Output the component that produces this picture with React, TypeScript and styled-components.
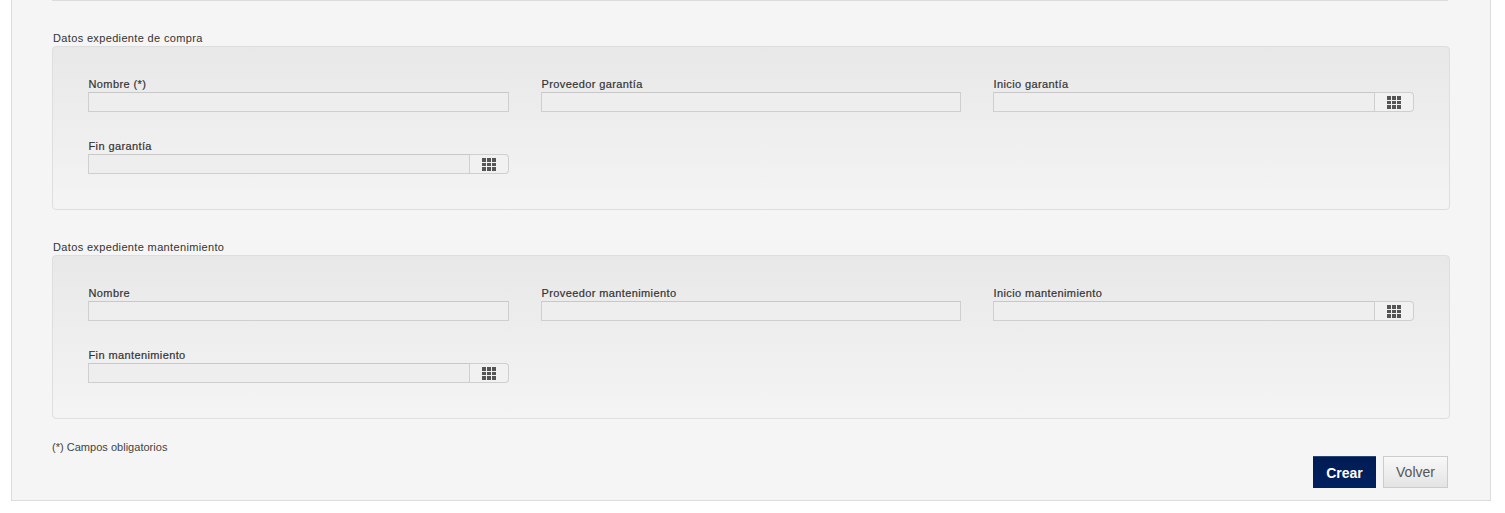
import styled, { createGlobalStyle } from 'styled-components';

const GlobalStyle = createGlobalStyle`
  html, body {
    margin: 0;
    padding: 0;
    background: #fff;
    font-family: 'Liberation Sans', Arial, sans-serif;
  }
`;

const Panel = styled.div`
  box-sizing: border-box;
  width: 1480px;
  height: 501px;
  margin-left: 11px;
  padding: 0 40px 0 40px;
  background: #f5f5f5;
  border: 1px solid #dcdcdc;
  border-top: none;
`;

const TopRule = styled.div`
  height: 1px;
  width: 1396px;
  background: #dcdcdc;
  margin-bottom: 31px;
`;

const SectionTitle = styled.div`
  font-size: 11px;
  line-height: 13px;
  letter-spacing: 0.35px;
  color: #333;
  margin-bottom: 1px;
  padding-left: 1px;
`;

const Fieldset = styled.div<{ $gapBelow: number }>`
  box-sizing: border-box;
  width: 1398px;
  height: 164px;
  padding: 30px 35px 0;
  margin-bottom: ${(props) => props.$gapBelow}px;
  border: 1px solid #dedede;
  border-radius: 4px;
  background: linear-gradient(to bottom, #e8e8e8 0%, #f4f4f4 100%);
  display: grid;
  grid-template-columns: 421px 420px 421px;
  grid-auto-rows: 62px;
  column-gap: 32px;
`;

const Field = styled.div`
  display: flex;
  flex-direction: column;
`;

const Label = styled.label`
  font-size: 11px;
  font-weight: normal;
  line-height: 15px;
  letter-spacing: 0.39px;
  color: #333;
  padding-left: 0.5px;
  -webkit-text-stroke: 0.2px #333;
`;

const InputRow = styled.div`
  display: flex;
  height: 20px;
`;

const TextInput = styled.input`
  box-sizing: border-box;
  flex: 1;
  min-width: 0;
  height: 20px;
  padding: 0 4px;
  background: #eeeeee;
  border: 1px solid #cfcfcf;
  border-top-color: #c8c8c8;
  outline: none;
`;

const CalendarButton = styled.button`
  box-sizing: border-box;
  width: 39px;
  height: 20px;
  padding: 0;
  display: flex;
  align-items: center;
  justify-content: center;
  background: #f1f1f1;
  border: 1px solid #cfcfcf;
  border-left: none;
  border-radius: 0 4px 4px 0;
`;

const Footer = styled.div`
  width: 1396px;
  margin-top: -8px;
`;

const Legend = styled.div`
  font-size: 11px;
  line-height: 12px;
  letter-spacing: 0.02px;
  color: #444;
`;

const Actions = styled.div`
  display: flex;
  justify-content: flex-end;
  gap: 7px;
  margin-top: 3px;
`;

const PrimaryButton = styled.button`
  box-sizing: border-box;
  width: 63px;
  height: 32px;
  padding: 0;
  font-family: inherit;
  font-size: 14px;
  font-weight: bold;
  color: #fff;
  background: linear-gradient(to bottom, #001c54 0%, #00205f 100%);
  border: none;
  border-top: 1px solid #2a4478;
`;

const SecondaryButton = styled.button`
  box-sizing: border-box;
  width: 65px;
  height: 32px;
  padding: 0;
  font-family: inherit;
  font-size: 14px;
  color: #555;
  background: linear-gradient(to bottom, #f8f8f8 0%, #e4e4e4 100%);
  border: 1px solid #cccccc;
`;

const GridIcon = () => (
  <svg width="14" height="13" viewBox="0 0 14 13" fill="#555">
    <rect x="0" y="0" width="4" height="4" />
    <rect x="5" y="0" width="4" height="4" />
    <rect x="10" y="0" width="4" height="4" />
    <rect x="0" y="5" width="4" height="3" />
    <rect x="5" y="5" width="4" height="3" />
    <rect x="10" y="5" width="4" height="3" />
    <rect x="0" y="9" width="4" height="4" />
    <rect x="5" y="9" width="4" height="4" />
    <rect x="10" y="9" width="4" height="4" />
  </svg>
);

const FormField = ({ label, date }: { label: string; date?: boolean }) => (
  <Field>
    <Label>{label}</Label>
    <InputRow>
      <TextInput type="text" />
      {date && (
        <CalendarButton type="button">
          <GridIcon />
        </CalendarButton>
      )}
    </InputRow>
  </Field>
);

const App = () => (
  <>
    <GlobalStyle />
    <Panel>
      <TopRule />
      <SectionTitle>Datos expediente de compra</SectionTitle>
      <Fieldset $gapBelow={31}>
        <FormField label="Nombre (*)" />
        <FormField label="Proveedor garantía" />
        <FormField label="Inicio garantía" date />
        <FormField label="Fin garantía" date />
      </Fieldset>
      <SectionTitle>Datos expediente mantenimiento</SectionTitle>
      <Fieldset $gapBelow={30}>
        <FormField label="Nombre" />
        <FormField label="Proveedor mantenimiento" />
        <FormField label="Inicio mantenimiento" date />
        <FormField label="Fin mantenimiento" date />
      </Fieldset>
      <Footer>
        <Legend>(*) Campos obligatorios</Legend>
        <Actions>
          <PrimaryButton type="button">Crear</PrimaryButton>
          <SecondaryButton type="button">Volver</SecondaryButton>
        </Actions>
      </Footer>
    </Panel>
  </>
);

export default App;
